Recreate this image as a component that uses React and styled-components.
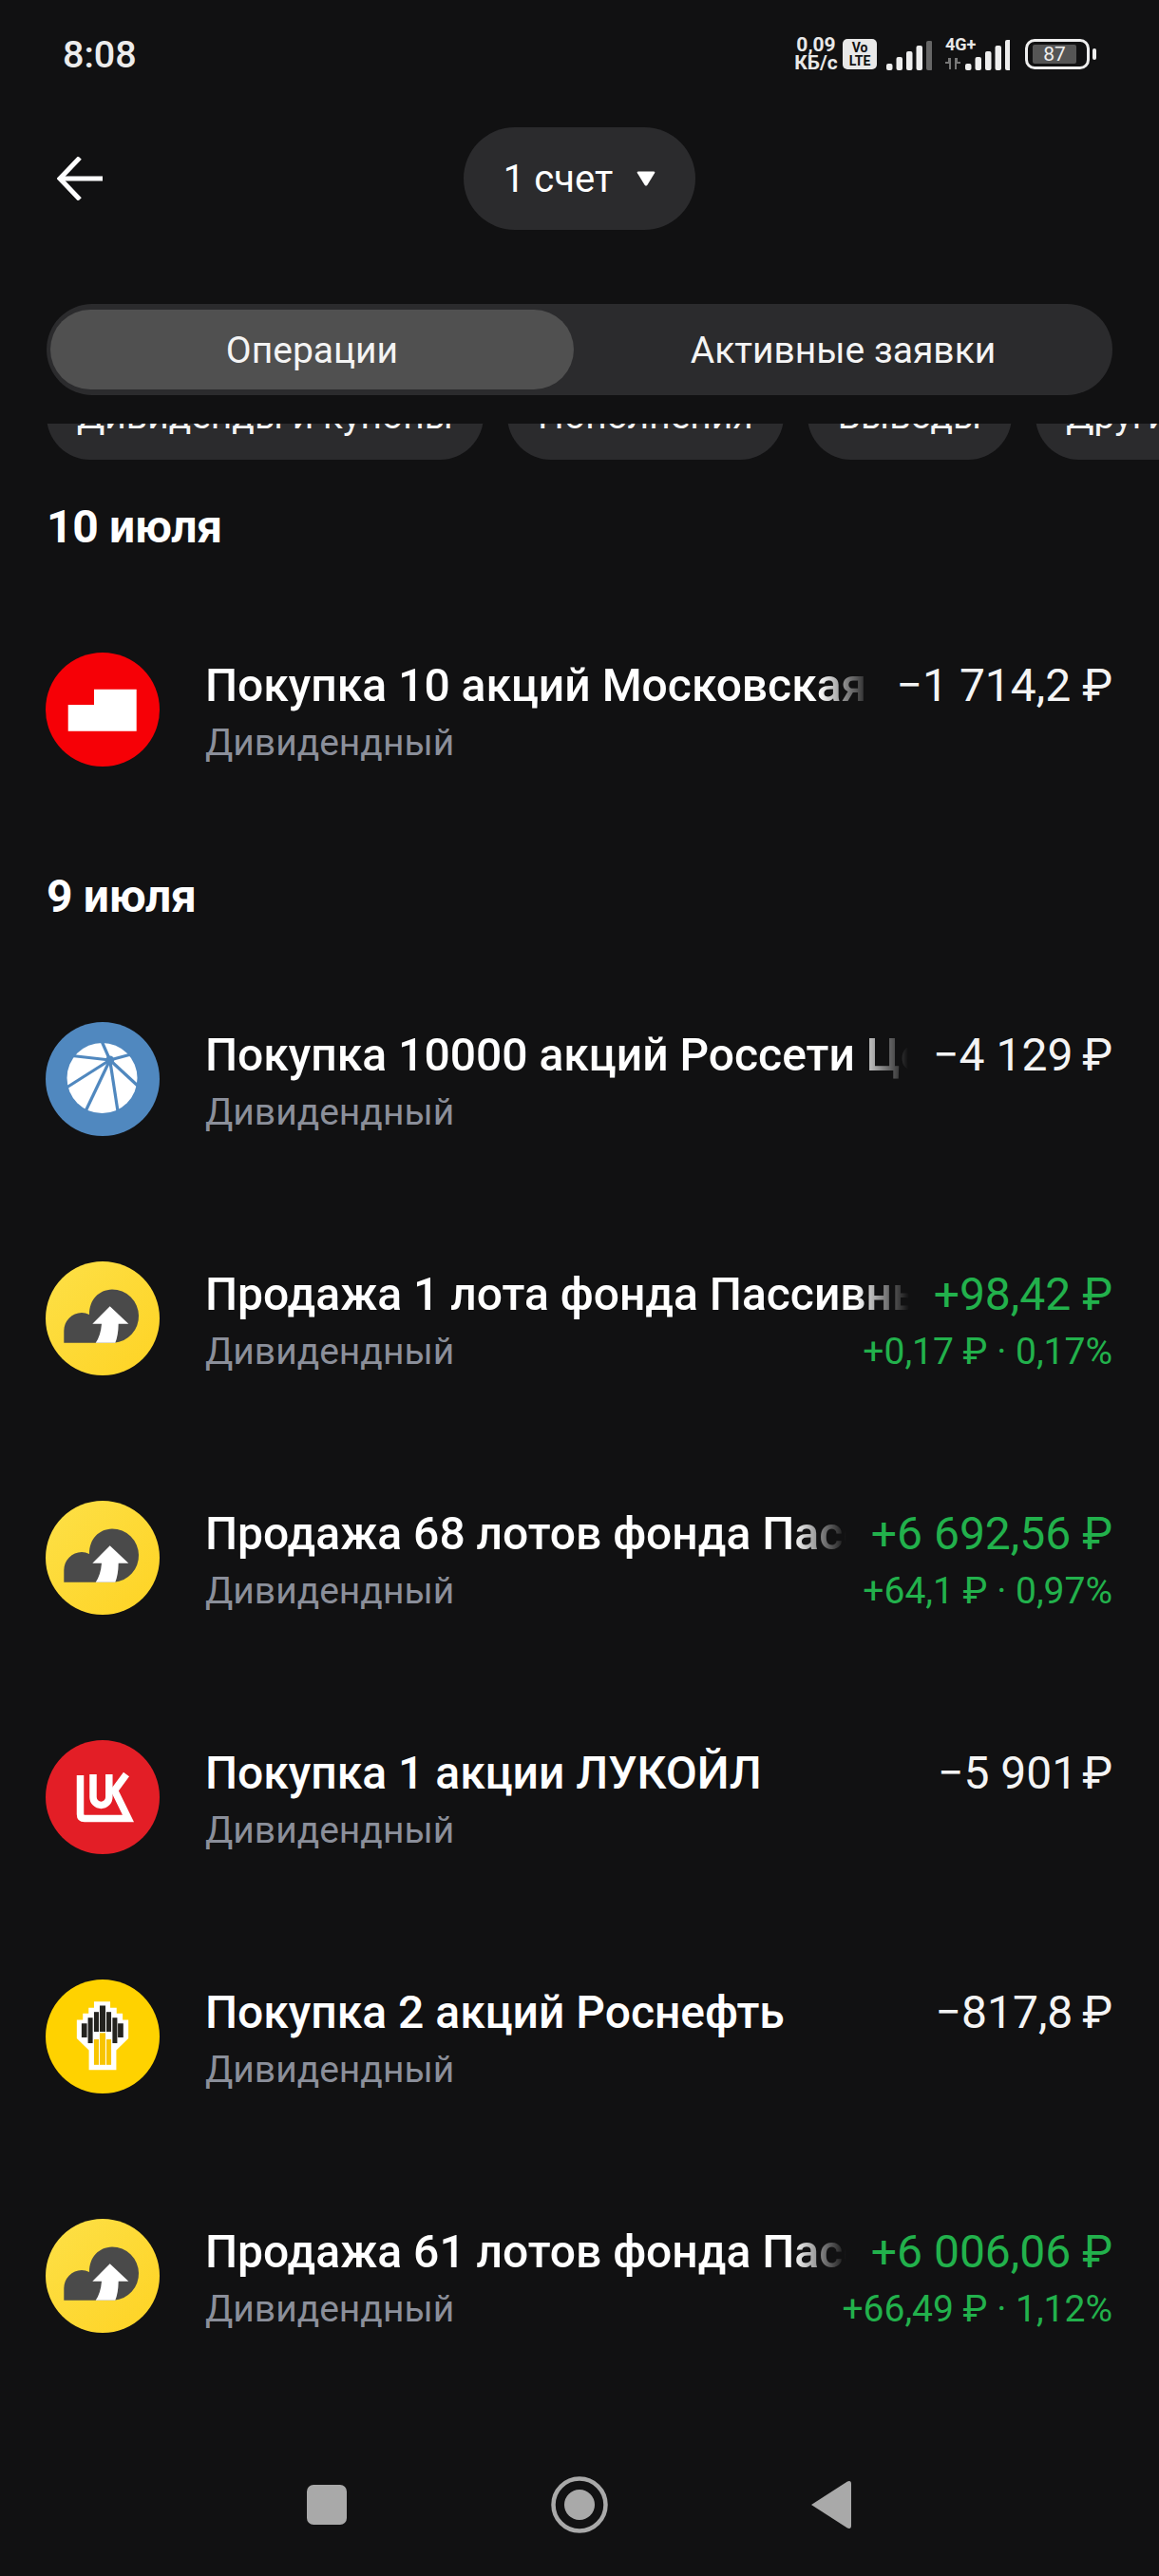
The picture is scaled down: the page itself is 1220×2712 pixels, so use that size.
import React from 'react';
import styled, { createGlobalStyle } from 'styled-components';

const GlobalStyle = createGlobalStyle`
  html, body { margin: 0; padding: 0; background: #111112; }
  * { box-sizing: border-box; }
`;

const Page = styled.div`
  width: 1220px;
  height: 2712px;
  overflow: hidden;
  background: #111112;
  color: #fff;
  font-family: Roboto, "Liberation Sans", sans-serif;
  display: flex;
  flex-direction: column;
`;

const StatusBar = styled.div`
  height: 112px;
  padding: 2px 66px 0 66px;
  display: flex;
  align-items: center;
  justify-content: space-between;
`;
const Time = styled.div`
  font-size: 39.5px;
  font-weight: 500;
  color: #ececec;
`;
const StatusIcons = styled.div`
  display: flex;
  align-items: center;
`;
const NetSpeed = styled.div`
  font-size: 21px;
  line-height: 19px;
  font-weight: 700;
  color: #e8e8e8;
  text-align: center;
  width: 52px;
  margin-right: 2px;
`;
const VoLte = styled.div`
  width: 36px;
  height: 32px;
  border-radius: 5px;
  background: #e8e8e8;
  color: #111;
  font-size: 14px;
  line-height: 14px;
  font-weight: 700;
  display: flex;
  flex-direction: column;
  align-items: center;
  justify-content: center;
  margin-right: 10px;
`;
const FourG = styled.div`
  width: 68px;
  height: 34px;
  position: relative;
  margin-left: 14px;
  font-size: 18px;
  line-height: 14px;
  font-weight: 700;
  color: #e8e8e8;
`;
const Battery = styled.div`
  width: 68px;
  height: 32px;
  margin-left: 16px;
  border: 3px solid #eee;
  border-radius: 10px;
  padding: 3px 11px 3px 5px;
  display: flex;
`;
const BatteryFill = styled.div`
  flex: 1;
  background: #555;
  border-radius: 2px;
  font-size: 21px;
  line-height: 20px;
  text-align: center;
  color: #eee;
`;
const BatteryNub = styled.div`
  width: 4px;
  height: 12px;
  margin-left: 3px;
  border-radius: 2px;
  background: #eee;
`;

const Header = styled.div`
  margin-top: 22px;
  height: 108px;
  display: grid;
  grid-template-columns: 1fr auto 1fr;
  align-items: center;
`;
const BackButton = styled.div`
  margin-left: 60px;
  display: flex;
`;
const AccountPill = styled.div`
  height: 108px;
  border-radius: 54px;
  background: #2b2b2d;
  padding: 0 42px 0 42px;
  display: flex;
  align-items: center;
  gap: 25px;
  font-size: 40px;
`;

const Tabs = styled.div`
  margin: 78px 49px 0;
  height: 96px;
  padding: 6px 0 6px 4px;
  border-radius: 48px;
  background: #2b2b2d;
  display: grid;
  grid-template-columns: 551px 1fr;
`;
const Tab = styled.div`
  border-radius: 42px;
  background: ${(p) => (p.$active ? '#505050' : 'transparent')};
  display: flex;
  align-items: center;
  justify-content: center;
  padding-top: 2px;
  font-size: 39px;
  color: #f4f4f4;
`;

const ChipsClip = styled.div`
  margin-top: 30px;
  height: 38px;
  overflow: hidden;
  display: flex;
  align-items: flex-end;
  gap: 25px;
  padding-left: 49px;
`;
const Chip = styled.div`
  flex-shrink: 0;
  height: 92px;
  padding: 0 32px;
  border-radius: 46px;
  background: #2b2b2d;
  display: flex;
  align-items: center;
  font-size: 39px;
  color: #f4f4f4;
  white-space: nowrap;
`;

const DateTitle = styled.div`
  height: 137px;
  padding: 43px 0 0 49px;
  font-size: 48px;
  line-height: 56px;
  font-weight: 700;
  letter-spacing: -0.3px;
`;

const Row = styled.div`
  height: 252px;
  padding: 0 48px;
  display: flex;
  align-items: center;
  gap: 48px;
`;
const Logo = styled.svg`
  width: 120px;
  height: 120px;
  flex-shrink: 0;
  display: block;
`;
const RowBody = styled.div`
  flex: 1;
  min-width: 0;
  height: 120px;
  padding-top: 5px;
`;
const RowLine = styled.div`
  display: flex;
  justify-content: space-between;
  gap: 26px;
  line-height: 60px;
  padding-right: 1px;
`;
const RowTitle = styled.div`
  flex: 1;
  min-width: 0;
  font-size: 48px;
  font-weight: 500;
  white-space: nowrap;
  overflow: hidden;
  ${(p) =>
    p.$fade &&
    `
    -webkit-mask-image: linear-gradient(to right, #000 calc(100% - 56px), transparent);
    mask-image: linear-gradient(to right, #000 calc(100% - 56px), transparent);
  `}
`;
const RowSub = styled.div`
  font-size: 39px;
  color: #8b8f9a;
`;
const Amount = styled.div`
  flex-shrink: 0;
  font-size: 48px;
  white-space: nowrap;
  color: ${(p) => (p.$green ? '#22b14c' : '#f4f4f4')};
`;
const Delta = styled.div`
  font-size: 39px;
  white-space: nowrap;
  color: #22b14c;
`;

const NavBar = styled.div`
  margin-top: auto;
  margin-bottom: 45px;
  height: 60px;
  display: flex;
  justify-content: center;
  align-items: center;
  gap: 206px;
`;

const SignalBars = ({ dimLast }) => (
  <svg width="48" height="33" viewBox="0 0 48 33">
    {[7, 14, 20, 26, 31].map((h, i) => (
      <rect key={i} x={i * 10.5} y={33 - h} width="6.5" height={h} rx="2" fill={dimLast && i === 4 ? '#666' : '#eee'} />
    ))}
  </svg>
);

const MoexLogo = () => (
  <Logo viewBox="0 0 120 120">
    <circle cx="60" cy="60" r="60" fill="#f60006" />
    <path d="M23.7 55H51V38.7H95.7V82.7H23.7Z" fill="#fff" />
  </Logo>
);

const RossetiLogo = () => (
  <Logo viewBox="0 0 120 120">
    <circle cx="60" cy="60" r="60" fill="#5088bf" />
    <circle cx="59.5" cy="59" r="37" fill="#fff" />
    <g stroke="#5088bf" strokeWidth="3.2" fill="none">
      <path d="M67.7 40L59 20" />
      <path d="M67.7 40L28 35.5" />
      <path d="M67.7 40L90 34" />
      <path d="M67.7 40L22 69" />
      <path d="M67.7 40L42 94" />
      <path d="M67.7 40L76 94" />
      <path d="M67.7 40L98 68" />
    </g>
    <circle cx="67.7" cy="40" r="4.5" fill="#5088bf" />
  </Logo>
);

const FundLogo = ({ id }) => (
  <Logo viewBox="0 0 120 120">
    <defs>
      <linearGradient id={id} x1="0" y1="0" x2="1" y2="1">
        <stop offset="0" stopColor="#fde047" />
        <stop offset="1" stopColor="#fed324" />
      </linearGradient>
    </defs>
    <circle cx="60" cy="60" r="60" fill={`url(#${id})`} />
    <path d="M19.3 85.7V73A19 19 0 0 1 38 54Q42 54 46 56C46 40 56 30 70 29.5A28 28 0 0 1 98 57A28 28 0 0 1 72 85.7Z" fill="#4a4a4a" />
    <path d="M67.7 47.3L87.3 65.7H76.7Q76.5 78 73.3 85.7H52.7Q58 78 59 65.7H49.3Z" fill="#fff" />
  </Logo>
);

const LukoilLogo = () => (
  <Logo viewBox="0 0 120 120">
    <circle cx="60" cy="60" r="60" fill="#e31e26" />
    <g stroke="#fff" strokeWidth="7.5" fill="none" strokeLinecap="round">
      <path d="M36.5 37V78Q36.5 82.5 41 82.5H87L72.5 53L85 36" strokeLinejoin="miter" strokeLinecap="butt" />
      <path d="M50 36V60A8.4 8.4 0 0 0 66.8 60V36" strokeLinecap="butt" />
    </g>
  </Logo>
);

const RosneftLogo = () => (
  <Logo viewBox="55 58 358 358">
    <circle cx="234" cy="237" r="179" fill="#ffd200" />
    <path
      d="M153 185H172V165H190V147H207V127H258V147H278V165H297V185H315V243L277 280V342H191V280L153 243Z"
      fill="#fff"
    />
    <g fill="#24231f">
      <rect x="168" y="196" width="17" height="44" />
      <rect x="188" y="178" width="15" height="80" />
      <rect x="207" y="160" width="15" height="62" />
      <rect x="225" y="140" width="18" height="82" />
      <rect x="246" y="160" width="15" height="62" />
      <rect x="265" y="178" width="15" height="80" />
      <rect x="282" y="196" width="17" height="44" />
    </g>
    <g fill="#f8c500">
      <rect x="207" y="246" width="15" height="80" />
      <rect x="225" y="226" width="18" height="100" />
      <rect x="246" y="246" width="15" height="80" />
    </g>
  </Logo>
);

const chips = ['Дивиденды и купоны', 'Пополнения', 'Выводы', 'Другие'];

const day1 = [
  { logo: <MoexLogo />, title: 'Покупка 10 акций Московская', amount: '−1 714,2 ₽', fade: true },
];

const day2 = [
  { logo: <RossetiLogo />, title: 'Покупка 10000 акций Россети Це', amount: '−4 129\u2009₽', fade: true },
  { logo: <FundLogo id="fund1" />, title: 'Продажа 1 лота фонда Пассивнь', amount: '+98,42 ₽', delta: '+0,17 ₽ · 0,17%', green: true, fade: true },
  { logo: <FundLogo id="fund2" />, title: 'Продажа 68 лотов фонда Пасс', amount: '+6 692,56 ₽', delta: '+64,1 ₽ · 0,97%', green: true, fade: true },
  { logo: <LukoilLogo />, title: 'Покупка 1 акции ЛУКОЙЛ', amount: '−5 901\u200A₽' },
  { logo: <RosneftLogo />, title: 'Покупка 2 акций Роснефть', amount: '−817,8\u2009₽' },
  { logo: <FundLogo id="fund3" />, title: 'Продажа 61 лотов фонда Пасс', amount: '+6 006,06 ₽', delta: '+66,49 ₽ · 1,12%', green: true, fade: true },
];

const Operation = ({ item }) => (
  <Row>
    {item.logo}
    <RowBody>
      <RowLine>
        <RowTitle $fade={item.fade}>{item.title}</RowTitle>
        <Amount $green={item.green}>{item.amount}</Amount>
      </RowLine>
      <RowLine>
        <RowSub>Дивидендный</RowSub>
        {item.delta && <Delta>{item.delta}</Delta>}
      </RowLine>
    </RowBody>
  </Row>
);

const App = () => (
  <Page>
    <GlobalStyle />
    <StatusBar>
      <Time>8:08</Time>
      <StatusIcons>
        <NetSpeed>
          0,09
          <br />
          КБ/с
        </NetSpeed>
        <VoLte>
          <span>Vo</span>
          <span>LTE</span>
        </VoLte>
        <SignalBars dimLast />
        <FourG>
          4G+
          <svg width="68" height="33" viewBox="0 0 68 33" style={{ position: 'absolute', left: 0, top: 1 }}>
            <path d="M0 24H3V20H6V32H4V26H0ZM16 24H13V20H10V32H12V26H16Z" fill="#777" />
            {[0, 1, 2, 3, 4].map((i) => (
              <rect key={i} x={21 + i * 10.5} y={[26, 19, 13, 7, 1][i]} width="6.5" height={[7, 14, 20, 26, 32][i]} rx="2" fill="#eee" />
            ))}
          </svg>
        </FourG>
        <Battery>
          <BatteryFill>87</BatteryFill>
        </Battery>
        <BatteryNub />
      </StatusIcons>
    </StatusBar>

    <Header>
      <BackButton>
        <svg width="48" height="46" viewBox="0 0 48 46" fill="none" stroke="#fff" strokeWidth="5">
          <path d="M48 23H3" />
          <path d="M24 1L3 23L24 45" />
        </svg>
      </BackButton>
      <AccountPill>
        <span>1 счет</span>
        <svg width="20" height="18" viewBox="0 0 21 18">
          <path d="M2 1H19Q21 1 20 3L12 16Q10.500 18 9 16L1 3Q0 1 2 1Z" fill="#fff" />
        </svg>
      </AccountPill>
      <div />
    </Header>

    <Tabs>
      <Tab $active>Операции</Tab>
      <Tab>Активные заявки</Tab>
    </Tabs>

    <ChipsClip>
      {chips.map((c) => (
        <Chip key={c}>{c}</Chip>
      ))}
    </ChipsClip>

    <DateTitle>10 июля</DateTitle>
    {day1.map((item) => (
      <Operation key={item.title} item={item} />
    ))}
    <DateTitle>9 июля</DateTitle>
    {day2.map((item) => (
      <Operation key={item.title} item={item} />
    ))}

    <NavBar>
      <svg width="60" height="60" viewBox="0 0 60 60">
        <rect x="9" y="9" width="42" height="42" rx="7" fill="#a9a9a9" />
      </svg>
      <svg width="60" height="60" viewBox="0 0 60 60">
        <circle cx="30" cy="30" r="27.500" fill="none" stroke="#a9a9a9" strokeWidth="4.500" />
        <circle cx="30" cy="30" r="16" fill="#a9a9a9" />
      </svg>
      <svg width="60" height="60" viewBox="0 0 60 60">
        <path d="M8 30L46 5.500Q50 4 50 8V52Q50 56 46 54.500Z" fill="#a9a9a9" />
      </svg>
    </NavBar>
  </Page>
);

export default App;
